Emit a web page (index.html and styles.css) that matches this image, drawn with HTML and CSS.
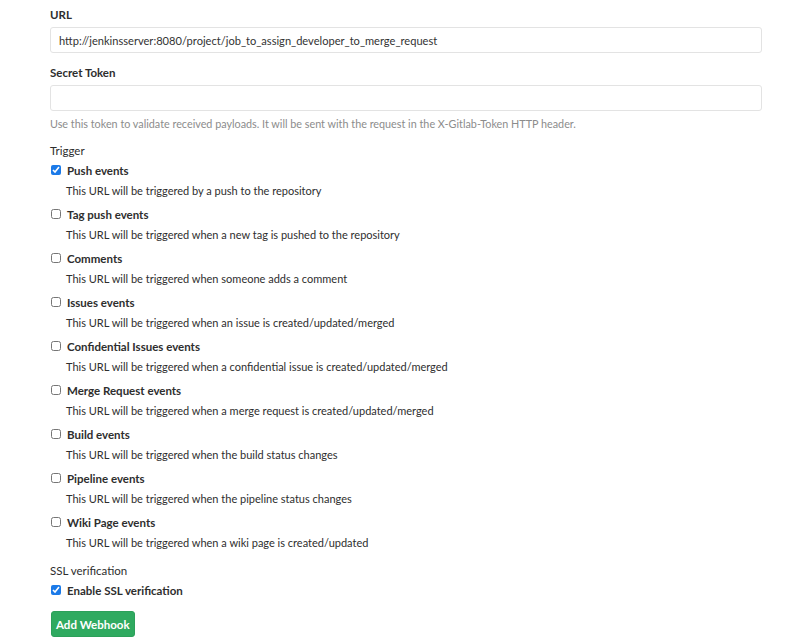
FILE: index.html
```html
<!DOCTYPE html>
<html>
<head>
<meta charset="utf-8">
<link rel="stylesheet" href="styles.css">
</head>
<body>
<form class="hook-form">
  <div class="field">
    <label class="field-label">URL</label>
    <input class="text-input" type="text" value="http://jenkinsserver:8080/project/job_to_assign_developer_to_merge_request">
  </div>
  <div class="field">
    <label class="field-label">Secret Token</label>
    <input class="text-input" type="text" value="">
    <p class="help">Use this token to validate received payloads. It will be sent with the request in the X-Gitlab-Token HTTP header.</p>
  </div>
  <div class="group">
    <div class="group-title">Trigger</div>
    <ul class="options">
      <li class="option">
        <label class="check"><input type="checkbox" checked><span>Push events</span></label>
        <p class="option-desc">This URL will be triggered by a push to the repository</p>
      </li>
      <li class="option">
        <label class="check"><input type="checkbox"><span>Tag push events</span></label>
        <p class="option-desc">This URL will be triggered when a new tag is pushed to the repository</p>
      </li>
      <li class="option">
        <label class="check"><input type="checkbox"><span>Comments</span></label>
        <p class="option-desc">This URL will be triggered when someone adds a comment</p>
      </li>
      <li class="option">
        <label class="check"><input type="checkbox"><span>Issues events</span></label>
        <p class="option-desc">This URL will be triggered when an issue is created/updated/merged</p>
      </li>
      <li class="option">
        <label class="check"><input type="checkbox"><span>Confidential Issues events</span></label>
        <p class="option-desc">This URL will be triggered when a confidential issue is created/updated/merged</p>
      </li>
      <li class="option">
        <label class="check"><input type="checkbox"><span>Merge Request events</span></label>
        <p class="option-desc">This URL will be triggered when a merge request is created/updated/merged</p>
      </li>
      <li class="option">
        <label class="check"><input type="checkbox"><span>Build events</span></label>
        <p class="option-desc">This URL will be triggered when the build status changes</p>
      </li>
      <li class="option">
        <label class="check"><input type="checkbox"><span>Pipeline events</span></label>
        <p class="option-desc">This URL will be triggered when the pipeline status changes</p>
      </li>
      <li class="option">
        <label class="check"><input type="checkbox"><span>Wiki Page events</span></label>
        <p class="option-desc">This URL will be triggered when a wiki page is created/updated</p>
      </li>
    </ul>
  </div>
  <div class="group ssl">
    <div class="group-title">SSL verification</div>
    <label class="check"><input type="checkbox" checked><span>Enable SSL verification</span></label>
  </div>
  <button class="btn-create" type="button">Add Webhook</button>
</form>
</body>
</html>
```
FILE: styles.css
```css
body {
  margin: 0;
  background: #fff;
  color: #2e2e2e;
  font-family: Lato, "Open Sans", sans-serif;
  font-size: 11px;
}

.hook-form {
  width: 712px;
  padding: 7px 0 0 50px;
}

.field {
  margin-bottom: 12px;
}

.field-label {
  display: block;
  font-weight: bold;
  font-size: 11.5px;
  line-height: 15px;
  margin-bottom: 5px;
}

.text-input {
  display: block;
  box-sizing: border-box;
  width: 100%;
  height: 26px;
  margin: 0;
  padding: 0 8px;
  border: 1px solid #e3e3e3;
  border-radius: 3px;
  background: #fff;
  font-family: inherit;
  font-size: 11.1px;
  color: #333;
  outline: none;
}

.help {
  margin: 5px 0 0;
  color: #8c8c8c;
  line-height: 15px;
  font-size: 10.8px;
}

.group-title {
  font-size: 11.5px;
  line-height: 16px;
  margin-bottom: 3px;
}

.options {
  list-style: none;
  margin: 0;
  padding: 0;
}

.option {
  height: 44px;
}

.ssl {
  margin-top: 5px;
}

.check {
  display: flex;
  align-items: center;
  height: 16px;
  font-weight: bold;
  font-size: 11.5px;
}

.check input {
  width: 10px;
  height: 10px;
  margin: 0 6px 0 1px;
  accent-color: #1b7ae8;
}

.option-desc {
  margin: 5px 0 0 16px;
  line-height: 15px;
}

.btn-create {
  display: block;
  margin: 13px 0 0 1px;
  height: 26px;
  padding: 0 4px;
  background: #2faa60;
  border: 1px solid #2ca05a;
  border-radius: 3px;
  color: #fff;
  font-family: inherit;
  font-weight: bold;
  font-size: 11.5px;
}
```
